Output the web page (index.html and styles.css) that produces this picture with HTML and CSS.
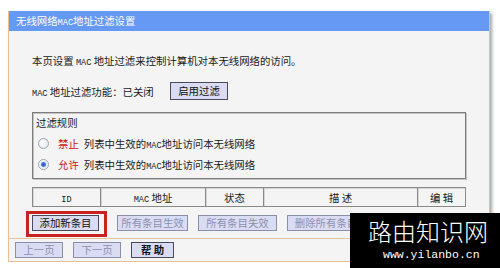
FILE: index.html
```html
<!DOCTYPE html>
<html lang="zh-CN">
<head>
    <meta charset="UTF-8">
    <title>无线网络MAC地址过滤设置</title>
    <link rel="stylesheet" href="styles.css">
</head>
<body>
    <div class="panel">
        <div class="panel-title">无线网络<span class="en">MAC</span>地址过滤设置</div>
        <div class="panel-body">
            <p class="desc">本页设置 <span class="en">MAC</span> 地址过滤来控制计算机对本无线网络的访问。</p>
            <div class="status-row">
                <span class="status-label"><span class="en">MAC</span> 地址过滤功能：已关闭</span>
                <button class="btn btn-wide">启用过滤</button>
            </div>
            <div class="rules">
                <div class="rules-title">过滤规则</div>
                <div class="rule">
                    <span class="radio"></span>
                    <span class="red">禁止</span>
                    <span>列表中生效的<span class="en">MAC</span>地址访问本无线网络</span>
                </div>
                <div class="rule">
                    <span class="radio checked"></span>
                    <span class="red">允许</span>
                    <span>列表中生效的<span class="en">MAC</span>地址访问本无线网络</span>
                </div>
            </div>
            <table class="list">
                <tr>
                    <th class="col-id"><span class="en">ID</span></th>
                    <th class="col-mac"><span class="en">MAC</span> 地址</th>
                    <th class="col-state">状态</th>
                    <th class="col-desc">描 述</th>
                    <th>编 辑</th>
                </tr>
            </table>
            <div class="actions">
                <button class="btn btn-add">添加新条目</button>
                <button class="btn disabled btn-all-on">所有条目生效</button>
                <button class="btn disabled btn-all-off">所有条目失效</button>
                <button class="btn disabled btn-del">删除所有条目</button>
            </div>
        </div>
        <div class="panel-footer">
            <button class="btn disabled btn-page">上一页</button>
            <button class="btn disabled btn-page">下一页</button>
            <button class="btn btn-help">帮 助</button>
        </div>
    </div>
    <div class="watermark">
        <div class="wm-title">路由知识网</div>
        <div class="wm-url">www.yilanbo.cn</div>
    </div>
</body>
</html>
```

FILE: styles.css
```css
body {
    margin: 0;
    background: #fff;
    font-family: "Noto Sans CJK SC", sans-serif;
    font-size: 10.4px;
    color: #1a1a1a;
}

.en {
    font-family: "Liberation Mono", monospace;
    font-size: 8.6px;
}

.panel {
    margin: 11px 0 0 8px;
    width: 482px;
    box-sizing: border-box;
    background: #f4f4f4;
    border: 1px solid #e9c096;
    border-top: none;
    box-shadow: 2px 2px 3px rgba(0, 0, 0, 0.35);
}

.panel-title {
    height: 20px;
    line-height: 20px;
    padding-left: 7px;
    background: #6699f3;
    color: #fff;
}

.panel-body {
    padding: 22px 0 7px 23px;
}

.desc {
    margin: 0;
    line-height: 16px;
}

.status-row {
    display: flex;
    align-items: center;
    margin-top: 11px;
    height: 18px;
}

.status-label {
    width: 138px;
}

.btn {
    font: inherit;
    height: 16px;
    padding: 0;
    border: 1px solid #4a4a5a;
    background: #d9dcf2;
    color: #111;
    line-height: 14px;
}

.btn.disabled {
    color: #8c90b0;
    border-color: #8a8ea8;
}

.btn-wide {
    width: 58px;
    height: 18px;
}

.rules {
    margin-top: 12px;
    width: 434px;
    box-sizing: border-box;
    border: 1px solid #7c7c7c;
    box-shadow: inset 1px 1px 0 #c4c4c4, 1px 1px 0 #c4c4c4;
    padding-bottom: 3px;
}

.rules-title {
    height: 20px;
    line-height: 20px;
    padding-left: 3px;
}

.rule {
    display: flex;
    align-items: center;
    height: 21px;
    padding-left: 5px;
}

.radio {
    width: 11px;
    height: 11px;
    box-sizing: border-box;
    border: 1px solid #9aa3ad;
    border-radius: 50%;
    background: radial-gradient(circle at 40% 40%, #fff, #dde2e8);
    margin-right: 9px;
}

.radio.checked {
    background: radial-gradient(circle, #2c55b8 0, #4a78d8 2px, #e4e9f0 3px, #fff 5px);
}

.red {
    color: #cc1010;
    margin-right: 5px;
}

.list {
    margin-top: 8px;
    width: 434px;
    border-collapse: collapse;
    border: 1px solid #7c7c7c;
}

.list th {
    height: 18px;
    padding: 0;
    font-weight: normal;
    border: 1px solid #8a8a8a;
    box-shadow: inset 1px 1px 0 #d6d6d6;
}

.col-id {
    width: 67px;
}

.col-mac {
    width: 104px;
}

.col-state {
    width: 57px;
}

.col-desc {
    width: 153px;
}

.actions {
    display: flex;
    margin-top: 8px;
}

.btn-add {
    position: relative;
    width: 67px;
    margin-right: 18px;
}

.btn-add::after {
    content: "";
    position: absolute;
    left: -7px;
    top: -5px;
    right: -9px;
    bottom: -7px;
    border: 3px solid #c8221e;
}

.btn-all-on {
    width: 71px;
    margin-right: 10px;
}

.btn-all-off {
    width: 79px;
    margin-right: 10px;
}

.btn-del {
    width: 78px;
}

.panel-footer {
    display: flex;
    border-top: 1px solid #e6c49e;
    padding: 3px 0 3px 6px;
}

.btn-page {
    width: 48px;
    margin-right: 10px;
}

.btn-help {
    width: 43px;
    font-weight: bold;
}

.watermark {
    position: absolute;
    left: 350px;
    top: 213px;
    width: 150px;
    height: 55px;
    box-sizing: border-box;
    padding: 7px 0 0 18px;
    background: #000;
    color: #fff;
}

.wm-title {
    font-size: 24px;
    font-weight: 300;
    line-height: 22px;
}

.wm-url {
    margin: 6px 0 0 15px;
    font-family: "Liberation Mono", monospace;
    font-size: 11.5px;
    line-height: 13px;
}
```
